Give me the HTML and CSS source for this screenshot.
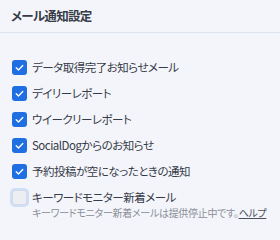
FILE: index.html
```html
<!DOCTYPE html>
<html lang="ja">
<head>
<meta charset="utf-8">
<title>メール通知設定</title>
<link rel="stylesheet" href="styles.css">
</head>
<body>
<div class="panel">
  <div class="panel-head">メール通知設定</div>

  <div class="options">
    <label class="option">
      <span class="box checked"><svg viewBox="0 0 16 16"><path d="M4.5 8.3l2.4 2.3 4.6-4.8"/></svg></span>
      <span class="option-text">データ取得完了お知らせメール</span>
    </label>
    <label class="option">
      <span class="box checked"><svg viewBox="0 0 16 16"><path d="M4.5 8.3l2.4 2.3 4.6-4.8"/></svg></span>
      <span class="option-text">デイリーレポート</span>
    </label>
    <label class="option">
      <span class="box checked"><svg viewBox="0 0 16 16"><path d="M4.5 8.3l2.4 2.3 4.6-4.8"/></svg></span>
      <span class="option-text">ウイークリーレポート</span>
    </label>
    <label class="option">
      <span class="box checked"><svg viewBox="0 0 16 16"><path d="M4.5 8.3l2.4 2.3 4.6-4.8"/></svg></span>
      <span class="option-text">SocialDogからのお知らせ</span>
    </label>
    <label class="option">
      <span class="box checked"><svg viewBox="0 0 16 16"><path d="M4.5 8.3l2.4 2.3 4.6-4.8"/></svg></span>
      <span class="option-text">予約投稿が空になったときの通知</span>
    </label>
    <label class="option">
      <span class="box off"></span>
      <span class="option-text">キーワードモニター新着メール</span>
    </label>
    <p class="note">キーワードモニター新着メールは提供停止中です。<a href="#">ヘルプ</a></p>
  </div>
</div>
</body>
</html>
```

FILE: styles.css
```css
* {
  margin: 0;
  padding: 0;
  box-sizing: border-box;
}

body {
  background-color: #f4f5fa;
  color: #353b47;
  font-family: "Noto Sans CJK JP", "Noto Sans", sans-serif;
  font-feature-settings: "palt";
}

.panel-head {
  height: 33px;
  padding: 6px 11px 0;
  font-size: 12.5px;
  font-weight: bold;
  letter-spacing: -0.7px;
  line-height: 20px;
  border-bottom: 1px solid #dde4f0;
}

.options {
  padding: 21px 0 0 12px;
}

.option {
  display: flex;
  align-items: center;
  height: 26px;
  gap: 5px;
}

.box {
  width: 15px;
  height: 15px;
  border-radius: 3px;
  display: flex;
  flex-shrink: 0;
}

.box svg {
  width: 15px;
  height: 15px;
}

.box path {
  fill: none;
  stroke: #fff;
  stroke-width: 1.4;
  stroke-linecap: round;
  stroke-linejoin: round;
}

.checked {
  background-color: #1f6fe3;
}

.off {
  background-color: #eceef3;
  border: 1px solid #d4dae6;
  box-shadow: 0 0 0 2px #cfdff7;
}

.option-text {
  font-size: 11.5px;
  letter-spacing: -0.5px;
  line-height: 18px;
}

.note {
  margin: -4px 0 0 20px;
  font-size: 10px;
  letter-spacing: -0.3px;
  line-height: 14px;
  color: #8a8f99;
}

.note a {
  color: #4a505c;
  text-decoration: underline;
}
```
